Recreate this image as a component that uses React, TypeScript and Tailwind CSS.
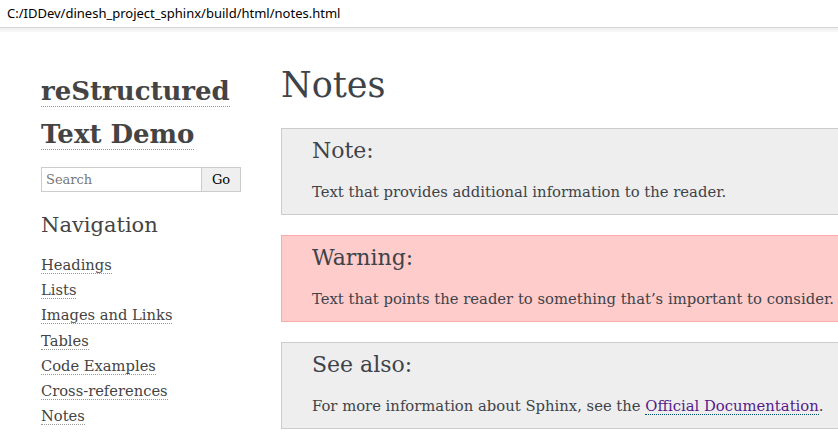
import React from "react";

const serif = { fontFamily: '"DejaVu Serif", Georgia, serif' };

const navItems = [
  "Headings",
  "Lists",
  "Images and Links",
  "Tables",
  "Code Examples",
  "Cross-references",
  "Notes",
];

function Admonition({
  title,
  children,
  tone,
}: {
  title: string;
  children: React.ReactNode;
  tone: "note" | "warning";
}) {
  const cls =
    tone === "warning"
      ? "bg-[#ffcccc] border-[#ffaaaa]"
      : "bg-[#eeeeee] border-[#cccccc]";
  return (
    <div className={`border ${cls} pl-[30px] pt-[7px] pb-[11px] w-[620px]`}>
      <p className="text-[22px] leading-[30px] text-[#3e4349] m-0">{title}</p>
      <p className="text-[14.8px] leading-[22px] text-[#3e4349] mt-[15px] whitespace-nowrap">{children}</p>
    </div>
  );
}

export default function App() {
  return (
    <div className="w-[838px] h-[445px] overflow-hidden bg-white relative">
      <div
        className="h-[28px] border-b border-[#d6d6d6] flex items-center pl-[7px] text-[13px] text-black"
        style={{ fontFamily: '"Noto Sans", "Open Sans", sans-serif' }}
      >
        C:/IDDev/dinesh_project_sphinx/build/html/notes.html
      </div>
      <div className="h-[4px] bg-gradient-to-b from-[#f0f0f0] to-[#f8f8f8]" />
      <div className="flex" style={serif}>
        <aside className="w-[281px] shrink-0 pl-[41px] pt-[38px]">
          <h1 className="text-[26px] leading-[43px] font-bold text-[#444444]">
            <span className="border-b border-dotted border-[#999999]">reStructured</span>
            <br />
            <span className="border-b border-dotted border-[#999999]">Text Demo</span>
          </h1>
          <div className="flex mt-[11px] w-[200px] h-[25px]">
            <div className="flex-1 border border-[#cccccc] border-r-0 flex items-center pl-[4px] text-[13px] text-[#777777]">
              Search
            </div>
            <div className="w-[40px] border border-[#cccccc] bg-[#efefef] flex items-center justify-center text-[13px] text-black">
              Go
            </div>
          </div>
          <h3 className="text-[21px] leading-[30px] text-[#444444] mt-[18px]">Navigation</h3>
          <ul className="mt-[12px]">
            {navItems.map((n) => (
              <li key={n} className="text-[14.7px] leading-[25.2px] text-[#444444]">
                <span className="border-b border-dotted border-[#999999]">{n}</span>
              </li>
            ))}
          </ul>
        </aside>
        <main className="flex-1 pt-[28px]">
          <h1 className="text-[35px] leading-[50px] text-[#3e4349]">Notes</h1>
          <div className="mt-[18px] flex flex-col gap-[20px]">
            <Admonition title="Note:" tone="note">
              Text that provides additional information to the reader.
            </Admonition>
            <Admonition title="Warning:" tone="warning">
              Text that points the reader to something that’s important to consider.
            </Admonition>
            <Admonition title="See also:" tone="note">
              For more information about Sphinx, see the{" "}
              <span className="text-[#551a8b] border-b border-dotted border-[#004b6b]">
                Official Documentation
              </span>
              .
            </Admonition>
          </div>
        </main>
      </div>
    </div>
  );
}
